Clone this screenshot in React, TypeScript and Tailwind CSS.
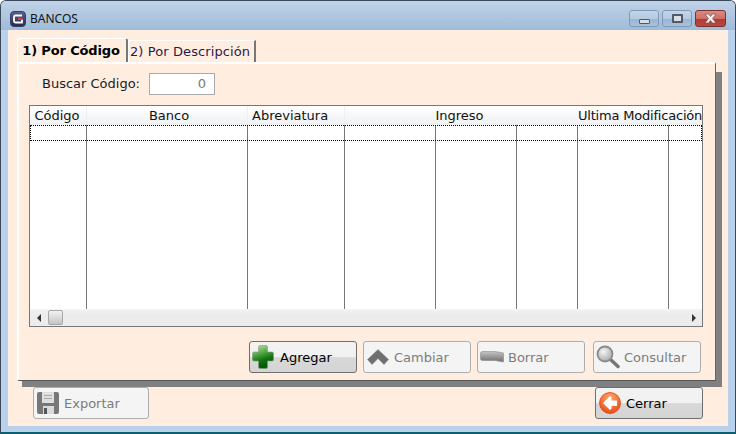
import React from 'react'
import type { ReactNode } from 'react'

const AppLogo = () => (
    <svg width="16" height="16" viewBox="0 0 16 16">
        <defs>
            <linearGradient id="logoFill" x1="0" y1="0" x2="0" y2="1">
                <stop offset="0" stopColor="#5a6390" />
                <stop offset="1" stopColor="#23294f" />
            </linearGradient>
        </defs>
        <rect x="0.500" y="0.500" width="15" height="15" rx="3.500" fill="url(#logoFill)" stroke="#3a4068" />
        <path d="M12 4.500 H5.500 Q4 4.500 4 6 V10 Q4 11.500 5.500 11.500 H12 V8.500" fill="none" stroke="#fff" strokeWidth="1.800" />
        <rect x="8" y="7" width="4.500" height="2" fill="#e2403a" />
    </svg>
)

const PlusIcon = () => (
    <svg width="22" height="24" viewBox="0 0 22 24">
        <defs>
            <linearGradient id="plusFill" x1="0" y1="0" x2="0.300" y2="1">
                <stop offset="0" stopColor="#c8e6b6" />
                <stop offset="0.4" stopColor="#58a848" />
                <stop offset="0.7" stopColor="#127412" />
                <stop offset="1" stopColor="#045a04" />
            </linearGradient>
        </defs>
        <path d="M6.500 2 Q6.500 0.500 8 0.500 H14 Q15.500 0.500 15.500 2 V7 H20 Q21.500 7 21.500 8.500 V14.500 Q21.500 16 20 16 H15.500 V22 Q15.500 23.500 14 23.500 H8 Q6.500 23.500 6.500 22 V16 H2 Q0.500 16 0.500 14.500 V8.500 Q0.500 7 2 7 H6.500 Z" fill="url(#plusFill)" stroke="#7f9c78" strokeWidth="0.600" />
    </svg>
)

const ChevronIcon = () => (
    <svg width="22" height="16" viewBox="0 0 22 16" className="ml-px">
        <path d="M11 0.500 L21.500 10.500 L17 15.500 L11 9.500 L5 15.500 L0.500 10.500 Z" fill="#6f6f6f" stroke="#8c8c8c" strokeWidth="0.600" />
    </svg>
)

const EraserIcon = () => (
    <svg width="24" height="12" viewBox="0 0 24 12">
        <defs>
            <linearGradient id="barFill" x1="0" y1="0" x2="0" y2="1">
                <stop offset="0" stopColor="#c4c4c4" />
                <stop offset="1" stopColor="#6e6e6e" />
            </linearGradient>
        </defs>
        <path d="M0.500 2 Q0.500 0.500 3 0.500 H15 L23.500 2 V11 L15 9.500 H3 Q0.500 9.500 0.500 8 Z" fill="url(#barFill)" stroke="#8a8a8a" strokeWidth="0.600" />
    </svg>
)

const MagnifierIcon = () => (
    <svg width="24" height="24" viewBox="0 0 24 24">
        <defs>
            <radialGradient id="lensFill" cx="0.400" cy="0.350" r="0.700">
                <stop offset="0" stopColor="#f6f6f6" />
                <stop offset="1" stopColor="#a5a5a5" />
            </radialGradient>
        </defs>
        <line x1="14" y1="14" x2="22" y2="21.500" stroke="#777" strokeWidth="3.500" strokeLinecap="round" />
        <circle cx="9" cy="9" r="7.500" fill="url(#lensFill)" stroke="#8b8b8b" strokeWidth="1.800" />
    </svg>
)

const DiskIcon = () => (
    <svg width="22" height="22" viewBox="0 0 22 22" className="ml-px">
        <path d="M2 0 H20 Q22 0 22 2 V20 Q22 22 20 22 H2 Q0 22 0 20 V2 Q0 0 2 0 Z" fill="#777" />
        <rect x="5" y="0" width="12" height="11" fill="#dedede" />
        <rect x="7" y="3" width="8" height="1" fill="#a8a8a8" />
        <rect x="7" y="6" width="8" height="1" fill="#a8a8a8" />
        <rect x="6" y="14" width="11" height="8" fill="#dadada" />
        <rect x="7" y="16" width="3" height="6" fill="#555" />
    </svg>
)

const CloseArrowIcon = () => (
    <svg width="22" height="22" viewBox="0 0 22 22" className="ml-px">
        <defs>
            <radialGradient id="orangeFill" cx="0.500" cy="0.250" r="0.850">
                <stop offset="0" stopColor="#ffa668" />
                <stop offset="1" stopColor="#e8420c" />
            </radialGradient>
        </defs>
        <circle cx="11" cy="11" r="10.500" fill="url(#orangeFill)" stroke="#d9480f" strokeWidth="0.800" />
        <path d="M11 4 L4 11 L11 18 L12.500 16.500 V14 H18 V8.500 H12.500 V5.500 Z" fill="#fff" />
    </svg>
)

const ActionButton = ({ icon, label, width = 'w-[108px]', disabled = false }: { icon: ReactNode; label: string; width?: string; disabled?: boolean }) => (
    <button className={`${width} h-8 flex items-center rounded-[3px] border text-[13px] ${disabled
        ? 'border-[#aeaeae] bg-[#f4f4f4] text-[#7c7c7c]'
        : 'border-[#6f6f6f] bg-[linear-gradient(#f3f3f3_0%,#f1f1f1_50%,#d8d8d8_52%,#d4d4d4_100%)] text-black'}`}>
        <span className="w-[30px] h-full shrink-0 flex items-center pl-[2px]">{icon}</span>
        <span className="pt-px">{label}</span>
    </button>
)

const WinButton = ({ className, children }: { className: string; children: ReactNode }) => (
    <div className={`h-[17px] flex items-center justify-center rounded-[3px] border ${className}`}>{children}</div>
)

const columns = [
    { label: 'Código', cell: 'w-[57px] pr-[2px] text-center border-r border-[#f0f0f0]' },
    { label: 'Banco', cell: 'w-[161px] pl-[4px] text-center border-r border-[#f0f0f0]' },
    { label: 'Abreviatura', cell: 'w-[97px] pl-[4px] text-left border-r border-[#f0f0f0]' },
    { label: 'Ingreso', cell: 'w-[233px] pr-[4px] text-center' },
    { label: 'Ultima Modificación', cell: 'w-[125px] text-left tracking-[-0.2px]' },
]
const bodyColumns = ['w-[57px]', 'w-[161px]', 'w-[97px]', 'w-[91px]', 'w-[81px]', 'w-[61px]', 'w-[91px]', 'w-[34px]']

export default function App() {
    return (
        <div className="w-[736px] h-[434px] flex flex-col overflow-hidden rounded-t-[6px] border border-[#3a4a5a] border-b-2 border-b-[#0d5f70] bg-[#b9d1ea] font-['DejaVu_Sans',sans-serif] text-[13px] text-[#1a1a2a]">
            {/* Title bar */}
            <div className="h-[29px] shrink-0 flex items-center pl-[9px] pt-[6px] pr-[9px] bg-[linear-gradient(#c0d3e7,#9fbbd9)]">
                <AppLogo />
                <span className="ml-[4px] font-['Noto_Sans',sans-serif] text-[12px] text-[#111]">BANCOS</span>
                <div className="ml-auto flex gap-[3px]">
                    <WinButton className="w-[30px] border-[#7f9ab8] bg-[linear-gradient(#c3d5e8_0%,#b4cbe2_50%,#97b4d2_52%,#a8c2dc_100%)]">
                        <span className="w-[11px] h-[5px] mt-[5px] bg-[#d8dee6] border border-[#505a66] rounded-[1px]" />
                    </WinButton>
                    <WinButton className="w-[30px] border-[#7f9ab8] bg-[linear-gradient(#c3d5e8_0%,#b4cbe2_50%,#97b4d2_52%,#a8c2dc_100%)]">
                        <span className="w-[11px] h-[9px] bg-[#d8dee6] border-2 border-[#505a66] rounded-[1px]" />
                    </WinButton>
                    <WinButton className="w-[31px] border-[#7b2f33] bg-[linear-gradient(#dc8a80_0%,#cf6e64_50%,#b03a34_52%,#b8483e_100%)]">
                        <svg width="15" height="11" viewBox="0 0 15 11">
                            <path d="M2 1 H5.500 L7.500 3.500 L9.500 1 H13 L9.500 5.500 L13 10 H9.500 L7.500 7.500 L5.500 10 H2 L5.500 5.500 Z" fill="#eef0f2" stroke="#6a4a4a" strokeWidth="0.600" />
                        </svg>
                    </WinButton>
                </div>
            </div>

            {/* Window body */}
            <div className="h-[396px] mx-[7px] shrink-0 pl-[9px] pt-[8px] bg-[#ffeee0]">
                <div className="flex items-end h-[24px]">
                    <div className="w-[111px] h-[24px] flex items-center justify-center pr-[2px] rounded-t-[3px] border-t border-l border-r-2 border-white border-r-[#777] bg-[#ffeee0] font-bold text-black tracking-[-0.15px]">1) Por Código</div>
                    <div className="w-[128px] h-[22px] flex items-center pl-[1px] pt-[1px] border-t border-l border-r-2 border-white border-r-[#777] text-[#2a1a4a] tracking-[0.1px]">2) Por Descripción</div>
                </div>

                <div className="flex w-[705px]">
                    <div className="w-[699px] h-[319px] shrink-0 flex flex-col border-t-2 border-l-2 border-white border-r border-r-[#666] border-b border-b-[#555] bg-[#ffeee0]">
                        <div className="flex items-center h-[22px] mt-[9px] ml-[23px]">
                            <span className="w-[107px]">Buscar Código:</span>
                            <div className="w-[66px] h-[22px] flex items-center justify-end pr-[8px] bg-white border border-[#aaa] text-[#777]">0</div>
                        </div>

                        {/* Grid */}
                        <div className="relative ml-[10px] mt-[10px] w-[674px] h-[222px] flex flex-col border border-[#777] bg-white">
                            <div className="h-[19px] shrink-0 flex overflow-hidden text-[#111] bg-[linear-gradient(#ffffff_0%,#fbfbfc_30%,#f5f6f7_60%,#eeeff0_100%)]">
                                {columns.map(c => (
                                    <div key={c.label} className={`${c.cell} shrink-0 whitespace-nowrap`}>{c.label}</div>
                                ))}
                            </div>
                            <div className="flex-1 flex">
                                {bodyColumns.map((w, i) => (
                                    <div key={i} className={`${w} shrink-0 ${i < bodyColumns.length - 1 ? 'border-r border-[#777]' : ''}`} />
                                ))}
                            </div>
                            <div className="absolute left-0 right-0 top-[19px] h-[16px] border border-dotted border-black" />
                            <div className="h-[17px] shrink-0 flex items-center bg-[linear-gradient(#f4f4f4,#ececec_30%)]">
                                <span className="w-[18px] flex justify-center">
                                    <svg width="4" height="8" viewBox="0 0 4 8"><path d="M4 0 V8 L0 4 Z" fill="#333" /></svg>
                                </span>
                                <span className="w-[15px] h-[15px] rounded-[2px] border border-[#a8a8a8] bg-[linear-gradient(#f2f2f2,#c4c4c4)]" />
                                <span className="ml-auto w-[16px] flex justify-center">
                                    <svg width="4" height="8" viewBox="0 0 4 8"><path d="M0 0 V8 L4 4 Z" fill="#333" /></svg>
                                </span>
                            </div>
                        </div>

                        {/* Actions */}
                        <div className="flex mt-[14px] ml-[230px]">
                            <ActionButton icon={<PlusIcon />} label="Agregar" />
                            <div className="ml-[6px]"><ActionButton icon={<ChevronIcon />} label="Cambiar" disabled /></div>
                            <div className="ml-[6px]"><ActionButton icon={<EraserIcon />} label="Borrar" disabled /></div>
                            <div className="ml-[8px]"><ActionButton icon={<MagnifierIcon />} label="Consultar" disabled /></div>
                        </div>
                    </div>
                    <div className="w-[6px] h-[315px] mt-[10px] bg-[#808080]" />
                </div>
                <div className="w-[700px] h-[6px] ml-[5px] -mt-[6px] bg-[#808080]" />

                <div className="flex justify-between w-[670px] ml-[16px]">
                    <ActionButton icon={<DiskIcon />} label="Exportar" width="w-[116px]" disabled />
                    <ActionButton icon={<CloseArrowIcon />} label="Cerrar" />
                </div>
            </div>
        </div>
    )
}
